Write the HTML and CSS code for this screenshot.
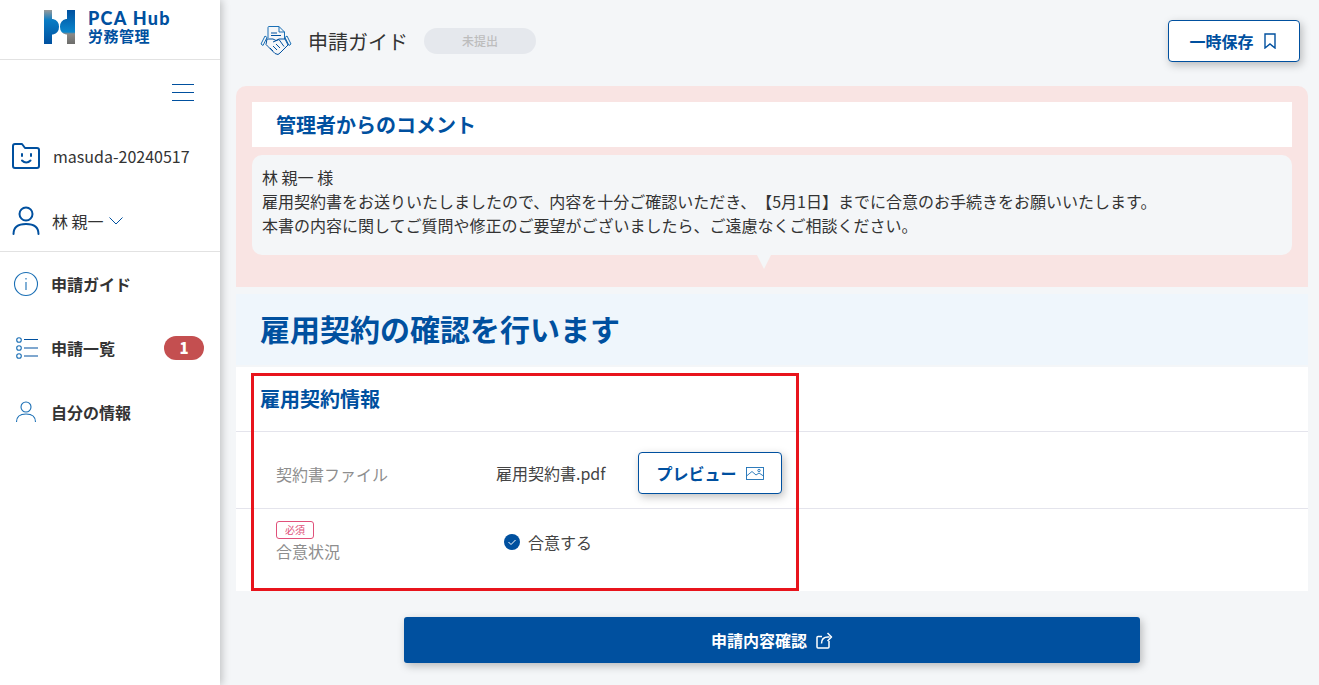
FILE: index.html
```html
<!DOCTYPE html>
<html lang="ja">
<head>
<meta charset="utf-8">
<title>申請ガイド</title>
<link rel="stylesheet" href="styles.css">
</head>
<body>
<div class="app">
  <aside class="sidebar">
    <div class="logo">
      <svg class="logo-mark" viewBox="0 0 32 34" width="32" height="34">
        <defs>
          <linearGradient id="lg1" x1="0" y1="0" x2="0" y2="1"><stop offset="0" stop-color="#9a9a98"/><stop offset=".3" stop-color="#0a7cc4"/><stop offset="1" stop-color="#00509f"/></linearGradient>
          <linearGradient id="lg2" x1="0" y1="0" x2="0" y2="1"><stop offset="0" stop-color="#00509f"/><stop offset=".65" stop-color="#0a86cc"/><stop offset=".7" stop-color="#8a8a88"/><stop offset="1" stop-color="#6c6c6a"/></linearGradient>
        </defs>
        <path d="M0 0h8v9h1a8 8 0 0 1 0 15.500H8V34H0z" fill="url(#lg1)"/>
        <path d="M31 0h-8v9h-1a8 8 0 0 0 0 15.500h1V34h8z" fill="url(#lg2)"/>
      </svg>
      <div class="logo-text"><div class="logo-en">PCA Hub</div><div class="logo-jp">労務管理</div></div>
    </div>
    <div class="menu-row">
      <svg width="22" height="18" viewBox="0 0 22 18" fill="#00509f"><rect width="22" height="1" y="0"/><rect width="22" height="1" y="8"/><rect width="22" height="1" y="16"/></svg>
    </div>
    <div class="org">
      <svg width="28" height="26" viewBox="0 0 28 26" fill="none" stroke="#00509f" stroke-width="2" stroke-linejoin="round" stroke-linecap="round"><path d="M1 3a2 2 0 0 1 2-2h7l3 4h12a2 2 0 0 1 2 2v16a2 2 0 0 1-2 2H3a2 2 0 0 1-2-2z"/><path d="M10 11v2M19 11v2M10 17.500c2.500 2.500 6 2.500 8.500 0"/></svg>
      <span>masuda-20240517</span>
    </div>
    <div class="user">
      <svg width="28" height="29" viewBox="0 0 28 29" fill="none" stroke="#00509f" stroke-width="2" stroke-linecap="round"><circle cx="14" cy="8" r="6.500"/><path d="M1.500 28c0-7 5-10 12.500-10s12.500 3 12.500 10"/></svg>
      <span>林 親一</span>
      <svg width="14" height="8" viewBox="0 0 14 8" fill="none" stroke="#00509f"><path d="M.5.500 7 7l6.500-6.500"/></svg>
    </div>
    <nav class="nav">
      <a class="nav-item">
        <svg width="26" height="26" viewBox="0 0 26 26" fill="none" stroke="#1a6fb5" stroke-width="1.100"><circle cx="13" cy="13" r="11.500"/><path d="M13 11v8M13 7v1.500"/></svg>
        <span>申請ガイド</span>
      </a>
      <a class="nav-item">
        <svg width="26" height="24" viewBox="0 0 26 24" fill="none" stroke="#00509f" stroke-width="1.100"><circle cx="6" cy="4" r="2.300" stroke="#1a6fb5"/><circle cx="6" cy="12" r="2.300" stroke="#1a6fb5"/><circle cx="6" cy="20" r="2.300" stroke="#1a6fb5"/><path d="M11 3.500h14M11 12h14M11 20h14"/></svg>
        <span>申請一覧</span>
        <b class="badge">1</b>
      </a>
      <a class="nav-item">
        <svg width="26" height="24" viewBox="0 0 26 24" fill="none" stroke="#1a6fb5" stroke-width="1.100"><circle cx="13" cy="7" r="5"/><path d="M3.500 22c0-5.500 3-8 9.500-8s9.500 2.500 9.500 8"/></svg>
        <span>自分の情報</span>
      </a>
    </nav>
  </aside>
  <main class="main">
    <header class="topbar">
      <svg class="guide-icon" width="32" height="32" viewBox="0 0 32 32" fill="none" stroke="#1a6fb5" stroke-width="1" stroke-linejoin="round">
        <path d="M8 13V2.500a1 1 0 0 1 1-1h10l5.500 5.500v7M19 1.500V7h5.500" />
        <path d="M11 8h6M11 10.500h10" stroke="#00509f"/>
        <path d="M5 11 1 19l2 1.500 4-8zM27 11l4 8-2 1.500-4-8z"/>
        <path d="M7 14h6l3 1.500 3-1.500h6l3 6-8 8-2 1.500-3-1-7-7-2-2zM13 17l6-2.500 5 7M10 23l3 3M13 21l4 4M16 19l4 4" stroke="#00509f"/>
      </svg>
      <h1 class="page-title">申請ガイド</h1>
      <span class="status">未提出</span>
      <button class="save-btn">一時保存
        <svg width="12" height="16" viewBox="0 0 12 16" fill="none" stroke="#00509f" stroke-width="1.400"><path d="M1 1h10v14l-5-4-5 4z"/></svg>
      </button>
    </header>
    <section class="comment">
      <h2 class="comment-title">管理者からのコメント</h2>
      <div class="bubble">
        <p>林 親一 様</p>
        <p>雇用契約書をお送りいたしましたので、内容を十分ご確認いただき、【5月1日】までに合意のお手続きをお願いいたします。</p>
        <p>本書の内容に関してご質問や修正のご要望がございましたら、ご遠慮なくご相談ください。</p>
      </div>
    </section>
    <h2 class="heading">雇用契約の確認を行います</h2>
    <section class="card">
      <h3 class="card-title">雇用契約情報</h3>
      <div class="row row-file">
        <div class="label">契約書ファイル</div>
        <div class="value">雇用契約書.pdf</div>
        <button class="preview-btn">プレビュー
          <svg width="18" height="13" viewBox="0 0 18 13" fill="none" stroke="#1a6fb5" stroke-width=".9"><rect x=".5" y=".5" width="17" height="12"/><path d="M.5 9 6 4.500 10 8l3-2 4.500 3"/><circle cx="13" cy="3.500" r="1.200"/></svg>
        </button>
      </div>
      <div class="row row-agree">
        <div class="label-wrap"><span class="required">必須</span><div class="label">合意状況</div></div>
        <div class="agree">
          <svg width="16" height="16" viewBox="0 0 16 16"><circle cx="8" cy="8" r="8" fill="#00509f"/><path d="m4.500 8 2.500 2.500 4.500-4.500" fill="none" stroke="#fff" stroke-width="1"/></svg>
          <span>合意する</span>
        </div>
      </div>
      <div class="highlight"></div>
    </section>
    <div class="actions">
      <button class="confirm-btn">申請内容確認
        <svg width="17" height="17" viewBox="0 0 17 17" fill="none" stroke="#fff" stroke-width="1.500" stroke-linejoin="round"><path d="M6 4.500H2a1 1 0 0 0-1 1V15a1 1 0 0 0 1 1h10a1 1 0 0 0 1-1V9"/><path d="M5.500 11.500c0-4 2.500-6.500 6.500-6.500h1.500M11.500 1l4 4-4 4"/></svg>
      </button>
    </div>
  </main>
</div>
</body>
</html>
```
FILE: styles.css
```css
* { box-sizing: border-box; }
html, body { margin: 0; height: 100%; }
body {
  font-family: "Noto Sans CJK JP", "Noto Sans", sans-serif;
  color: #333;
  background: #f4f6f8;
  overflow: hidden;
  text-spacing-trim: space-all;
}
h1, h2, h3, p { margin: 0; }
.app { display: flex; height: 685px; }

.sidebar {
  width: 220px;
  flex: none;
  background: #fff;
  box-shadow: 2px 0 8px rgba(0, 0, 0, .22);
  z-index: 1;
}
.logo {
  height: 60px;
  border-bottom: 1px solid #e2e2e2;
  display: flex;
  align-items: flex-start;
  gap: 12px;
  padding: 10px 0 0 44px;
}
.logo-en { font-family: "Lato", sans-serif; font-weight: 900; font-size: 18px; line-height: 17px; letter-spacing: 1.300px; color: #00509f; white-space: nowrap; }
.logo-jp { font-weight: 700; font-size: 15px; line-height: 16px; letter-spacing: .5px; color: #00509f; margin-top: 1px; }
.menu-row { display: flex; justify-content: flex-end; padding: 24px 26px 0 0; }
.org { display: flex; align-items: center; gap: 13px; padding: 41px 0 0 12px; font-size: 16px; line-height: 26px; }
.user { display: flex; align-items: center; gap: 12px; padding: 34px 0 13px 12px; font-size: 16px; border-bottom: 1px solid #e2e2e2; height: 83px; }
.user span { margin-right: -7px; }
.nav { display: flex; flex-direction: column; }
.nav-item {
  display: flex;
  align-items: center;
  height: 64px;
  gap: 12px;
  padding: 0 16px 0 13px;
  font-size: 16px;
  font-weight: 700;
  color: #333;
}
.badge {
  margin-left: auto;
  width: 40px;
  height: 24px;
  line-height: 24px;
  border-radius: 12px;
  background: #c44f50;
  color: #fff;
  font-size: 15px;
  text-align: center;
}

.main { flex: 1; padding: 0 11px 0 16px; min-width: 0; }
.topbar { height: 86px; display: flex; align-items: center; padding: 0 8px 5px 24px; }
.guide-icon { margin-right: 16px; }
.page-title { font-size: 20px; font-weight: 400; line-height: 30px; color: #333; padding-top: 2px; }
.status {
  margin-left: 16px;
  width: 112px;
  height: 26px;
  line-height: 26px;
  border-radius: 13px;
  background: #e5e8ed;
  color: #bdbdbd;
  font-size: 12px;
  font-weight: 500;
  text-align: center;
}
.save-btn {
  margin-left: auto;
  width: 132px;
  height: 42px;
  display: flex;
  align-items: center;
  justify-content: center;
  gap: 10px;
  padding: 0 3px 0 0;
  background: #fff;
  border: 1px solid #00509f;
  border-radius: 4px;
  box-shadow: 2px 3px 8px rgba(0, 0, 0, .25);
  color: #00509f;
  font: 700 16px "Noto Sans CJK JP", sans-serif;
}

.comment {
  height: 201px;
  padding: 16px;
  background: #f9e4e3;
  border-radius: 10px 10px 0 0;
  position: relative;
}
.comment::after {
  content: "";
  position: absolute;
  left: 521px;
  top: 169px;
  border: 7px solid transparent;
  border-top: 14px solid #f4f6f8;
  border-bottom: 0;
}
.comment-title {
  height: 45px;
  line-height: 45px;
  padding-left: 24px;
  background: #fff;
  color: #00509f;
  font-size: 20px;
  font-weight: 700;
}
.bubble {
  margin-top: 8px;
  height: 100px;
  padding: 10px 10px;
  background: #f4f6f8;
  border-radius: 10px;
  font-size: 16px;
  line-height: 24px;
  white-space: nowrap;
}
.heading {
  margin-top: 7px;
  height: 71px;
  line-height: 68px;
  padding-left: 24px;
  background: #eff6fc;
  color: #00509f;
  font-size: 30px;
  font-weight: 700;
}
.card { position: relative; margin-top: 2px; height: 224px; background: #fff; }
.card-title {
  height: 65px;
  line-height: 64px;
  padding-left: 24px;
  border-bottom: 1px solid #e4e4ec;
  color: #00509f;
  font-size: 20px;
  font-weight: 700;
}
.row { display: flex; }
.row-file { height: 77px; align-items: center; padding: 6px 0 0 40px; border-bottom: 1px solid #e4e4ec; }
.label { color: #8e8e8e; font-size: 16px; line-height: 24px; }
.row-file .label { width: 220px; padding-top: 2px; }
.value { width: 142px; font-size: 16px; color: #444; }
.preview-btn {
  width: 144px;
  height: 42px;
  display: flex;
  align-items: center;
  justify-content: center;
  gap: 9px;
  background: #fff;
  border: 1px solid #00509f;
  border-radius: 4px;
  box-shadow: 2px 3px 8px rgba(0, 0, 0, .25);
  color: #00509f;
  font: 700 16px "Noto Sans CJK JP", sans-serif;
}
.row-agree { padding: 12px 0 0 40px; }
.label-wrap { width: 228px; }
.required {
  display: block;
  width: 38px;
  height: 18px;
  line-height: 16px;
  border: 1px solid #e0507a;
  border-radius: 3px;
  color: #e0507a;
  font-size: 10px;
  text-align: center;
}
.agree { display: flex; align-items: center; gap: 8px; height: 20px; margin-top: 11px; font-size: 16px; color: #444; }
.highlight {
  position: absolute;
  left: 15px;
  top: 6px;
  width: 548px;
  height: 218px;
  border: 3px solid #e8141c;
  pointer-events: none;
}
.actions { display: flex; justify-content: center; padding-top: 26px; }
.confirm-btn {
  width: 736px;
  height: 46px;
  display: flex;
  align-items: center;
  justify-content: center;
  gap: 9px;
  background: #00509f;
  border: 0;
  border-radius: 3px;
  box-shadow: 2px 3px 8px rgba(0, 0, 0, .25);
  color: #fff;
  font: 700 16px "Noto Sans CJK JP", sans-serif;
}
```
